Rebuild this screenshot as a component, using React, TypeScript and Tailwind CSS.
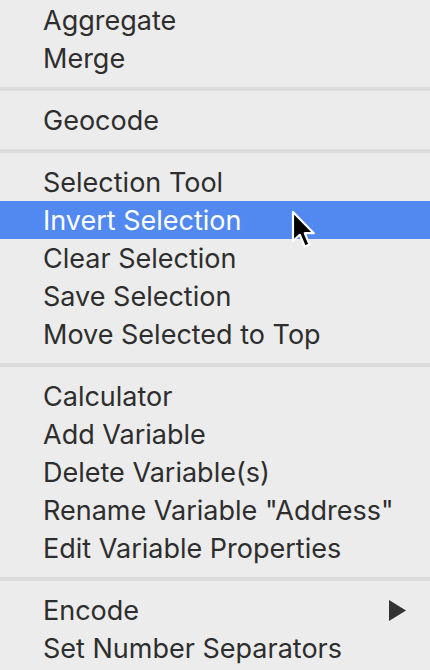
type Entry = { label: string; active?: boolean; submenu?: boolean } | "sep";

const MENU: Entry[] = [
  { label: "Aggregate" },
  { label: "Merge" },
  "sep",
  { label: "Geocode" },
  "sep",
  { label: "Selection Tool" },
  { label: "Invert Selection", active: true },
  { label: "Clear Selection" },
  { label: "Save Selection" },
  { label: "Move Selected to Top" },
  "sep",
  { label: "Calculator" },
  { label: "Add Variable" },
  { label: "Delete Variable(s)" },
  { label: 'Rename Variable "Address"' },
  { label: "Edit Variable Properties" },
  "sep",
  { label: "Encode", submenu: true },
  { label: "Set Number Separators" },
];

function Cursor() {
  return (
    <svg
      className="absolute left-[291px] top-[210px]"
      width="26"
      height="40"
      viewBox="0 0 13 20"
    >
      <path
        d="M1 1 L1 15.5 L4.4 12.4 L6.9 18.3 L9.3 17.3 L6.9 11.6 L11.4 11.6 Z"
        fill="#000"
        stroke="#fff"
        strokeWidth="1.1"
        strokeLinejoin="round"
      />
    </svg>
  );
}

export default function App() {
  return (
    <div
      className="relative w-[430px] h-[670px] overflow-hidden bg-[#ececec] pt-px text-[27px] text-[#2e2e2e]"
      style={{ fontFamily: "Inter, 'Noto Sans', sans-serif" }}
    >
      {MENU.map((item, i) =>
        item === "sep" ? (
          <div key={i} className="h-6 flex items-center">
            <div className="h-1 w-full bg-[#dbdbdb]" />
          </div>
        ) : (
          <div
            key={i}
            className={
              item.active
                ? "h-[38px] flex items-center pl-[43px] pr-6 bg-[#5189f1] text-white"
                : "h-[38px] flex items-center pl-[43px] pr-6"
            }
          >
            <span className="flex-1 leading-none">{item.label}</span>
            {item.submenu && (
              <svg width="17" height="21" viewBox="0 0 17 21">
                <path d="M0 0 L17 10.5 L0 21 Z" fill="#333" />
              </svg>
            )}
          </div>
        )
      )}
      <Cursor />
    </div>
  );
}
